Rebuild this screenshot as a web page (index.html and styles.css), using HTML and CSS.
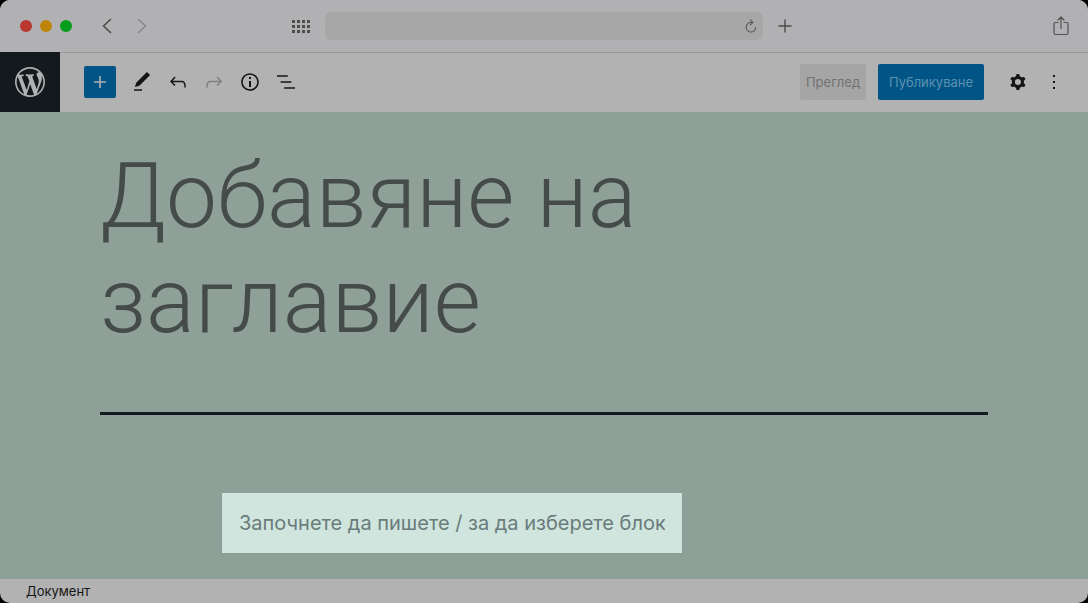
FILE: index.html
```html
<!DOCTYPE html>
<html lang="bg">
<head>
<meta charset="utf-8">
<title>Документ</title>
<link rel="stylesheet" href="styles.css">
</head>
<body>
<div class="window">
  <header class="browser">
    <div class="browser-left">
      <div class="lights">
        <span class="light light-close"></span>
        <span class="light light-min"></span>
        <span class="light light-max"></span>
      </div>
      <div class="history">
        <button class="plain" aria-label="Back"><svg width="12" height="18" viewBox="0 0 12 18" fill="none" stroke="#4a4a4b" stroke-width="1.6" stroke-linecap="round" stroke-linejoin="round"><path d="M9.500 2.500 2.500 9l7 6.500"/></svg></button>
        <button class="plain" aria-label="Forward"><svg width="12" height="18" viewBox="0 0 12 18" fill="none" stroke="#88888a" stroke-width="1.600" stroke-linecap="round" stroke-linejoin="round"><path d="M2.500 2.500 9.500 9l-7 6.500"/></svg></button>
      </div>
    </div>
    <div class="browser-center">
      <button class="plain" aria-label="Tabs"><svg width="18" height="13" viewBox="0 0 18 13" fill="#4d4d4e"><path d="M0 0h3v3H0zM5 0h3v3H5zM10 0h3v3h-3zM15 0h3v3h-3zM0 5h3v3H0zM5 5h3v3H5zM10 5h3v3h-3zM15 5h3v3h-3zM0 10h3v3H0zM5 10h3v3H5zM10 10h3v3h-3zM15 10h3v3h-3z"/></svg></button>
      <div class="address">
        <input class="address-input" type="text" aria-label="Address">
        <button class="plain" aria-label="Reload"><svg width="12" height="14" viewBox="0 0 12 14" fill="none" stroke="#5c5c5d" stroke-width="1.100" stroke-linecap="round"><path d="M7.400 3.400H6a4.800 4.800 0 1 0 4.800 4.800M5.400.9 7.900 3.400 5.400 5.900"/></svg></button>
      </div>
      <button class="plain" aria-label="New tab"><svg width="14" height="14" viewBox="0 0 14 14" stroke="#4a4a4b" stroke-width="1.400"><path d="M7 .5v13M.5 7h13"/></svg></button>
    </div>
    <div class="browser-right">
      <button class="plain" aria-label="Share"><svg width="16" height="20" viewBox="0 0 16 20" fill="none" stroke="#505051" stroke-width="1.200" stroke-linecap="round" stroke-linejoin="round"><path d="M5 6.500H2.500a1.500 1.500 0 0 0-1.500 1.500v9a1.500 1.500 0 0 0 1.500 1.500h11a1.500 1.500 0 0 0 1.500-1.500V8a1.500 1.500 0 0 0-1.500-1.500H11M8 12.500V1.200M5 4l3-3 3 3"/></svg></button>
    </div>
  </header>

  <div class="toolbar">
    <a class="logo" href="#" aria-label="WordPress"><svg width="36" height="36" viewBox="-2 -2 24 24" fill="#b0b1b2"><path d="M20 10c0-5.510-4.490-10-10-10C4.480 0 0 4.490 0 10c0 5.520 4.480 10 10 10 5.510 0 10-4.480 10-10zM7.780 15.370L4.370 6.220c.55-.02 1.170-.08 1.170-.08.5-.06.44-1.130-.06-1.110 0 0-1.450.11-2.370.11-.18 0-.37 0-.58-.01C4.120 2.690 6.870 1.110 10 1.110c2.330 0 4.450.87 6.050 2.340-.68-.11-1.650.39-1.650 1.580 0 .74.45 1.360.9 2.100.35.61.55 1.360.55 2.460 0 1.490-1.400 5-1.400 5l-3.030-8.370c.54-.02.82-.17.82-.17.5-.05.44-1.250-.06-1.220 0 0-1.440.12-2.380.12-.87 0-2.330-.12-2.330-.12-.5-.03-.56 1.200-.06 1.220l.92.08 1.260 3.410zM17.410 10c.24-.64.74-1.870.43-4.250.7 1.290 1.050 2.710 1.050 4.250 0 3.290-1.730 6.240-4.400 7.780.97-2.590 1.940-5.200 2.920-7.780zM6.100 18.090C3.120 16.650 1.110 13.530 1.110 10c0-1.300.23-2.480.72-3.590C3.250 10.300 4.670 14.200 6.100 18.090zm4.030-6.630l2.580 6.980c-.86.29-1.760.45-2.710.45-.79 0-1.570-.11-2.290-.33.81-2.380 1.620-4.740 2.420-7.100z"/></svg></a>
    <div class="tools">
      <button class="add" aria-label="Add block"><svg width="24" height="24" viewBox="0 0 24 24" fill="#b2b2b2"><path d="M18 11.200h-5.200V6h-1.600v5.200H6v1.600h5.200V18h1.600v-5.200H18z"/></svg></button>
      <div class="tool-icons">
        <button class="plain" aria-label="Tools"><svg width="24" height="24" viewBox="0 0 24 24"><path d="M20.100 5.100L16.900 2 6.200 12.700l-1.300 4.400 4.500-1.300L20.100 5.100zM4 20.800h8v-1.500H4v1.500z"/></svg></button>
        <button class="plain" aria-label="Undo"><svg width="24" height="24" viewBox="0 0 24 24"><path d="M18.300 11.700c-.6-.6-1.400-.9-2.300-.9H6.700l2.900-3.300-1.100-1-4.500 5L8.500 16l1-1-2.700-2.700H16c.5 0 .9.2 1.300.5 1 1 1 3.400 1 4.500v.3h1.500v-.2c0-1.500 0-4.300-1.500-5.700z"/></svg></button>
        <button class="plain off" aria-label="Redo" disabled><svg width="24" height="24" viewBox="0 0 24 24"><path d="M15.600 6.500l-1.100 1 2.900 3.300H8c-.9 0-1.700.3-2.300.9-1.400 1.500-1.400 4.200-1.400 5.600v.2h1.500v-.3c0-1.100 0-3.500 1-4.500.3-.3.7-.5 1.300-.5h9.200L14.500 15l1.100 1.100 4.600-4.600-4.600-5z"/></svg></button>
        <button class="plain" aria-label="Details"><svg width="24" height="24" viewBox="0 0 24 24"><path d="M12 3.200c-4.800 0-8.800 3.900-8.800 8.800 0 4.800 3.900 8.800 8.800 8.800 4.800 0 8.800-3.900 8.800-8.800 0-4.800-4-8.800-8.800-8.800zm0 16c-4 0-7.200-3.300-7.200-7.200C4.800 8 8 4.800 12 4.800s7.200 3.300 7.200 7.200c0 4-3.200 7.200-7.200 7.200zM11 17h2v-6h-2v6zm0-8h2V7h-2v2z"/></svg></button>
        <button class="plain" aria-label="List view"><svg width="24" height="24" viewBox="0 0 24 24"><path d="M13.800 5.200H3v1.500h10.800V5.200zm-3.600 12v1.500H21v-1.500H10.200zm7.200-6H6.600v1.500h10.800v-1.500z"/></svg></button>
      </div>
    </div>
    <div class="actions">
      <button class="preview">Преглед</button>
      <button class="publish">Публикуване</button>
      <div class="tool-icons menu-icons">
        <button class="plain" aria-label="Settings"><svg width="24" height="24" viewBox="0 0 24 24"><path fill-rule="evenodd" d="M10.289 4.836A1 1 0 0111.275 4h1.306a1 1 0 01.987.836l.244 1.466c.787.26 1.503.679 2.108 1.218l1.393-.522a1 1 0 011.216.437l.653 1.130a1 1 0 01-.23 1.273l-1.148.944a6.025 6.025 0 010 2.435l1.149.946a1 1 0 01.23 1.272l-.653 1.130a1 1 0 01-1.216.437l-1.394-.522c-.605.54-1.320.958-2.108 1.218l-.244 1.466a1 1 0 01-.987.836h-1.306a1 1 0 01-.986-.836l-.244-1.466a5.995 5.995 0 01-2.108-1.218l-1.394.522a1 1 0 01-1.217-.436l-.653-1.131a1 1 0 01.23-1.272l1.149-.946a6.026 6.026 0 010-2.435l-1.148-.944a1 1 0 01-.23-1.272l.653-1.131a1 1 0 011.217-.437l1.393.522a5.994 5.994 0 012.108-1.218l.244-1.466zM14.929 12a3 3 0 11-6 0 3 3 0 016 0z"/></svg></button>
        <button class="plain" aria-label="Options"><svg width="24" height="24" viewBox="0 0 24 24"><path d="M13 19h-2v-2h2v2zm0-6h-2v-2h2v2zm0-6h-2V5h2v2z"/></svg></button>
      </div>
    </div>
  </div>

  <main class="canvas">
    <h1 class="title">Добавяне на заглавие</h1>
    <div class="column">
      <input class="block" type="text" aria-label="Block" placeholder="Започнете да пишете / за да изберете блок">
    </div>
  </main>

  <footer class="status">Документ</footer>
</div>
</body>
</html>
```
FILE: styles.css
```css
* { box-sizing: border-box; }

body {
  margin: 0;
  background: #000;
  font-family: Inter, Roboto, "Liberation Sans", sans-serif;
}

button, input { font-family: inherit; }

.window {
  display: flex;
  flex-direction: column;
  min-height: 100vh;
  border-radius: 10px;
  overflow: hidden;
  background: #b2b2b2;
}

.plain {
  display: flex;
  padding: 0;
  border: 0;
  background: none;
}

.browser {
  display: grid;
  grid-template-columns: 272fr 500px 277fr;
  align-items: center;
  height: 52px;
  padding: 0 19px 0 20px;
  background: #b1b1b3;
}

.browser-left, .lights, .history, .browser-center { display: flex; align-items: center; }
.browser-left { gap: 29px; }
.lights { gap: 8px; }
.light { width: 12px; height: 12px; border-radius: 50%; }
.light-close { background: #b9382f; }
.light-min { background: #bd8609; }
.light-max { background: #069c1d; }
.history { gap: 23px; }
.browser-center { gap: 15px; }

.address {
  flex: 1;
  display: flex;
  align-items: center;
  height: 28px;
  padding-right: 6px;
  border-radius: 6px;
  background: #a7a7a8;
}

.address-input {
  flex: 1;
  min-width: 0;
  border: 0;
  background: none;
}

.browser-right { justify-self: end; }

.toolbar {
  display: flex;
  align-items: center;
  height: 60px;
  padding-right: 22px;
  box-shadow: inset 0 1px #98989c;
}

.logo {
  display: flex;
  align-items: center;
  justify-content: center;
  width: 60px;
  height: 60px;
  background: #14191d;
}

.tools {
  display: flex;
  align-items: center;
  gap: 14px;
  padding-left: 24px;
}

.add {
  display: flex;
  align-items: center;
  justify-content: center;
  width: 32px;
  height: 32px;
  padding: 0;
  border: 0;
  border-radius: 2px;
  background: #005586;
}

.tool-icons { display: flex; gap: 12px; fill: #151515; }
.off { fill: #818181; }

.actions {
  display: flex;
  align-items: center;
  gap: 12px;
  margin-left: auto;
}

.preview, .publish {
  height: 36px;
  padding: 0;
  border: 0;
  border-radius: 2px;
  font-size: 13px;
}

.preview { width: 66px; background: #a5a5a5; color: #727272; }
.publish { width: 106px; background: #005586; color: #5e91b0; }
.menu-icons { padding-left: 10px; }

.canvas {
  flex: 1;
  padding: 32px 100px 26px;
  background: #8fa099;
}

.title {
  margin: 0;
  padding-bottom: 58px;
  border-bottom: 3px solid #141c22;
  color: #444b48;
  font-family: Roboto, "Noto Sans", sans-serif;
  font-size: 91px;
  font-weight: 300;
  line-height: 105px;
}

.column {
  max-width: 644px;
  margin: 78px auto 0;
}

.block {
  display: block;
  width: 460px;
  max-width: 100%;
  height: 60px;
  padding: 0 17px;
  border: 0;
  background: #cfe5dd;
  font-size: 20px;
}

.block::placeholder { color: #6a7b7c; opacity: 1; }

.status {
  height: 24px;
  padding-left: 26px;
  color: #151515;
  font-size: 13px;
  line-height: 24px;
}
```
